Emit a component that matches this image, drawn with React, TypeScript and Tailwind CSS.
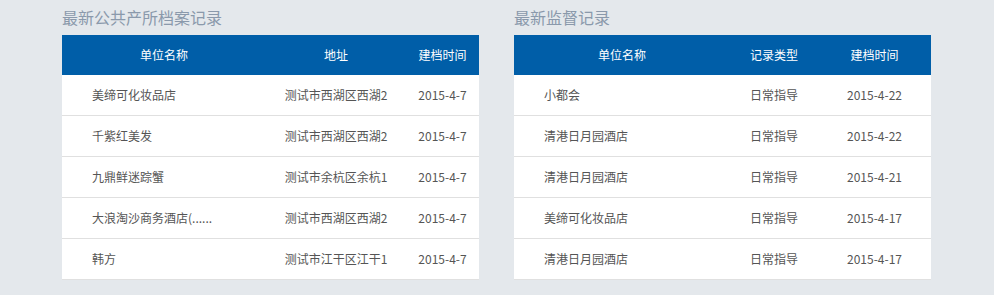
const archives = [
  ['美缔可化妆品店', '测试市西湖区西湖2', '2015-4-7'],
  ['千紫红美发', '测试市西湖区西湖2', '2015-4-7'],
  ['九鼎鲜迷踪蟹', '测试市余杭区余杭1', '2015-4-7'],
  ['大浪淘沙商务酒店(......', '测试市西湖区西湖2', '2015-4-7'],
  ['韩方', '测试市江干区江干1', '2015-4-7'],
];

const records = [
  ['小都会', '日常指导', '2015-4-22'],
  ['清港日月园酒店', '日常指导', '2015-4-22'],
  ['清港日月园酒店', '日常指导', '2015-4-21'],
  ['美缔可化妆品店', '日常指导', '2015-4-17'],
  ['清港日月园酒店', '日常指导', '2015-4-17'],
];

function Panel({
  title,
  heads,
  rows,
  cols,
}: {
  title: string;
  heads: string[];
  rows: string[][];
  cols: string;
}) {
  return (
    <div className="w-[417px]">
      <div className="h-[35px] pb-[1px] flex items-center text-[16px] text-[#8a99ab]">{title}</div>
      <div className={`grid ${cols} h-[40px] items-center bg-[#005ea8] text-white text-[12px]`}>
        {heads.map((h) => (
          <div key={h} className="text-center">
            {h}
          </div>
        ))}
      </div>
      {rows.map((r, i) => (
        <div
          key={i}
          className={`grid ${cols} h-[41px] items-center bg-white border-b border-[#e0e0e0] text-[12px] text-[#555]`}
        >
          <div className="pl-[30px] whitespace-nowrap">{r[0]}</div>
          <div className="text-center whitespace-nowrap">{r[1]}</div>
          <div className="text-center whitespace-nowrap">{r[2]}</div>
        </div>
      ))}
    </div>
  );
}

export default function App() {
  return (
    <div
      className="w-[994px] h-[295px] bg-[#e4e8ec] pl-[62px] flex gap-[35px]"
      style={{ fontFamily: '"Noto Sans CJK SC", "Noto Sans", sans-serif' }}
    >
      <Panel
        title="最新公共产所档案记录"
        heads={['单位名称', '地址', '建档时间']}
        rows={archives}
        cols="grid-cols-[204px_140px_73px]"
      />
      <Panel
        title="最新监督记录"
        heads={['单位名称', '记录类型', '建档时间']}
        rows={records}
        cols="grid-cols-[216px_88px_113px]"
      />
    </div>
  );
}
